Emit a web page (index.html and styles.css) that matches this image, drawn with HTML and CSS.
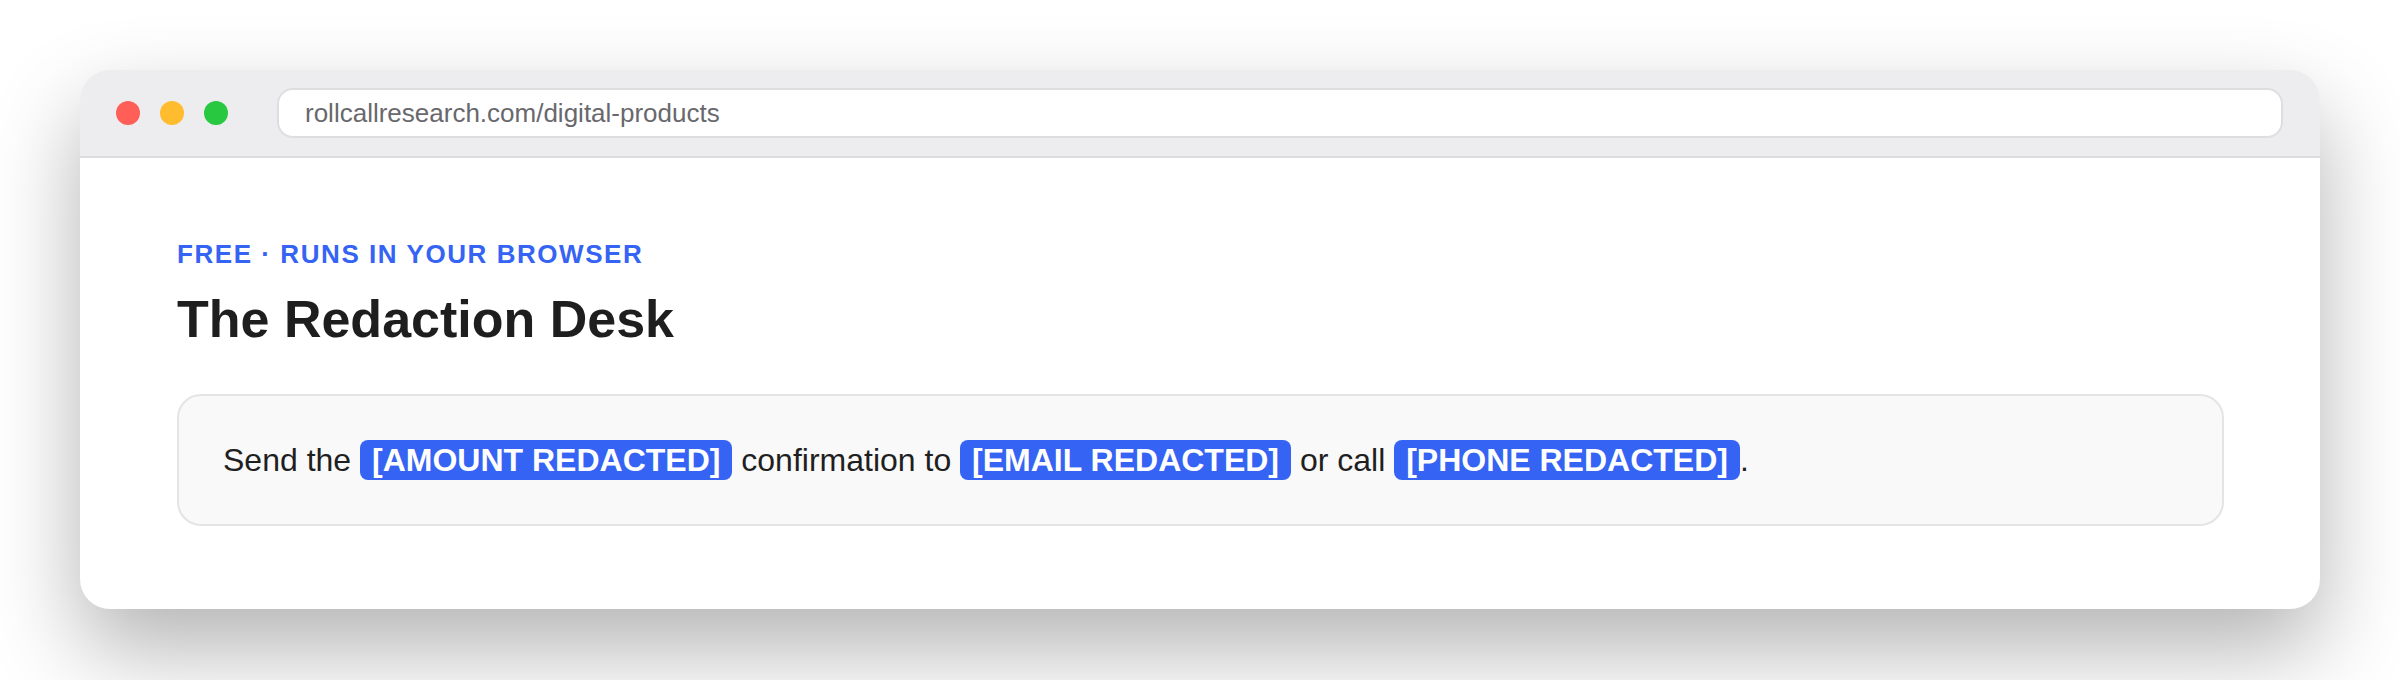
FILE: index.html
```html
<!DOCTYPE html>
<html lang="en">
<head>
<meta charset="utf-8">
<title>The Redaction Desk</title>
<link rel="stylesheet" href="styles.css">
</head>
<body>
  <div class="window">
    <div class="titlebar">
      <div class="lights">
        <span class="light red"></span>
        <span class="light yellow"></span>
        <span class="light green"></span>
      </div>
      <div class="url">rollcallresearch.com/digital-products</div>
    </div>
    <main class="content">
      <p class="eyebrow">FREE · RUNS IN YOUR BROWSER</p>
      <h1 class="title">The Redaction Desk</h1>
      <div class="panel">
        <p class="sentence">Send the <span class="redact">[AMOUNT REDACTED]</span> confirmation to <span class="redact">[EMAIL REDACTED]</span> or call <span class="redact">[PHONE REDACTED]</span>.</p>
      </div>
    </main>
  </div>
</body>
</html>
```

FILE: styles.css
```css
* { box-sizing: border-box; }

html, body {
  margin: 0;
  background: #ffffff;
  height: 680px;
  overflow: hidden;
}

body {
  padding: 70px 80px;
  font-family: "Liberation Sans", Arial, sans-serif;
}

.window {
  background: #ffffff;
  border-radius: 30px;
  overflow: hidden;
  box-shadow: 0 40px 90px rgba(0, 0, 0, 0.3);
}

.titlebar {
  height: 88px;
  background: #ededef;
  border-bottom: 2px solid #dcdcdf;
  display: flex;
  align-items: center;
  padding: 0 37px 0 36px;
}

.lights {
  display: flex;
  gap: 20px;
  margin-right: 49px;
}

.light {
  width: 24px;
  height: 24px;
  border-radius: 50%;
  display: block;
}
.red { background: #ff5f57; }
.yellow { background: #febc2e; }
.green { background: #28c840; }

.url {
  flex: 1;
  height: 50px;
  background: #ffffff;
  border: 2px solid #dedee1;
  border-radius: 16px;
  display: flex;
  align-items: center;
  padding-left: 26px;
  font-size: 26px;
  color: #68686d;
}

.content {
  padding: 80px 96px 83px 97px;
}

.eyebrow {
  margin: 0 0 18px;
  font-size: 26px;
  line-height: 32px;
  font-weight: 700;
  letter-spacing: 0.06em;
  color: #3563f3;
}

.title {
  margin: 0 0 44px;
  font-size: 52px;
  line-height: 62px;
  font-weight: 700;
  color: #1e1e1e;
}

.panel {
  background: #f9f9f9;
  border: 2px solid #e4e4e4;
  border-radius: 24px;
  padding: 40px 44px;
}

.sentence {
  margin: 0;
  font-size: 32px;
  line-height: 48px;
  color: #1f1f1f;
}

.redact {
  background: #3563f3;
  color: #ffffff;
  font-weight: 700;
  padding: 2px 12px;
  border-radius: 8px;
}
```
